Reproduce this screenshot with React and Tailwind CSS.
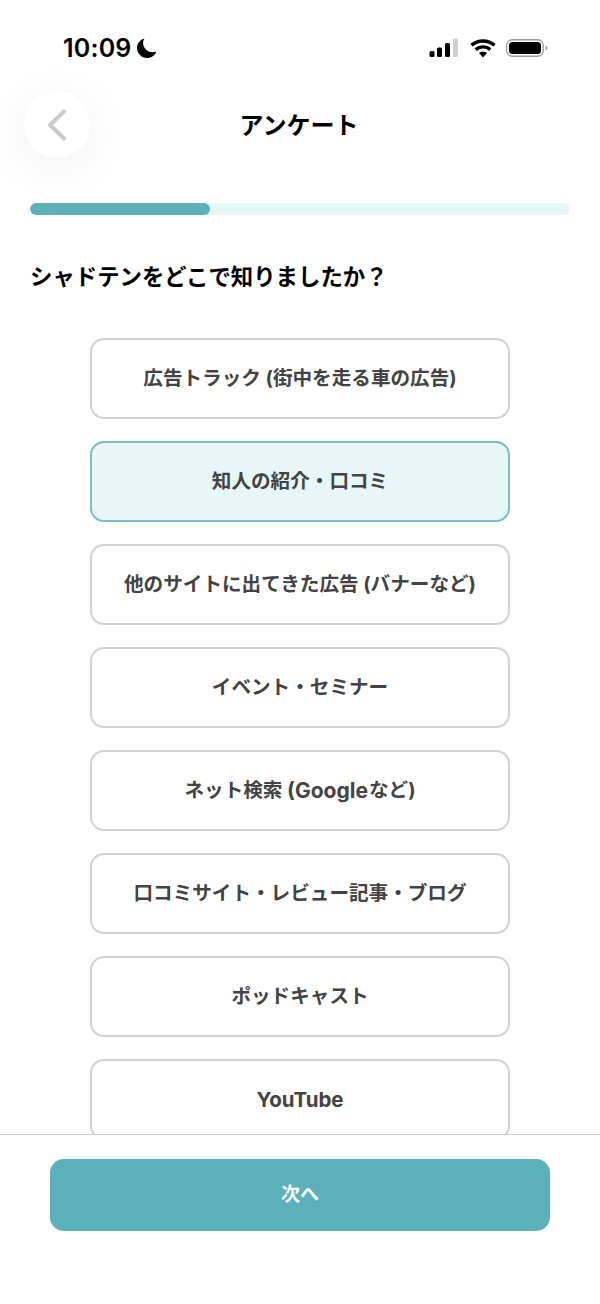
const FONT = "font-['Inter','Noto_Sans_CJK_JP',sans-serif]";

const options = [
  <>広告トラック (街中を走る車の広告)</>,
  <>知人の紹介・口コミ</>,
  <>他のサイトに出てきた広告 (バナーなど)</>,
  <>イベント・セミナー</>,
  <>ネット検索 <span className="text-[21px]">(Google</span><span className="ml-[1px]">など)</span></>,
  <>口コミサイト・レビュー記事・ブログ</>,
  <>ポッドキャスト</>,
  <span className="text-[20.5px]">YouTube</span>,
];

function Moon() {
  return (
    <svg width="20" height="20" viewBox="0 0 20 20" fill="#000">
      <path d="M7.6 0.4C3.2 1.4 0 5.3 0 10c0 5.5 4.5 10 10 10 4.3 0 8-2.7 9.4-6.6-1.2.5-2.5.8-3.9.8-5.2 0-9.4-4.200-9.4-9.400 0-1.500.5-3.100 1.500-4.400z" />
    </svg>
  );
}

function StatusIcons() {
  return (
    <div className="flex items-center">
      <svg width="30" height="20" viewBox="0 0 30 20" className="mr-[11px]">
        <rect x="0.500" y="13" width="5" height="6" rx="1.500" fill="#000" />
        <rect x="8" y="9.500" width="5" height="9.500" rx="1.500" fill="#000" />
        <rect x="16" y="5" width="5" height="14" rx="1.500" fill="#000" />
        <rect x="24" y="0.500" width="5" height="18.500" rx="1.500" fill="#cfcfcf" />
      </svg>
      <svg width="26" height="20" viewBox="0 0 26 20" className="mr-[10px]" fill="none" stroke="#000" strokeWidth="3.400">
        <path d="M1.500 7.300C7.800 1.500 18.200 1.500 24.500 7.300" />
        <path d="M5.700 11.600C9.800 8 16.200 8 20.300 11.600" />
        <path d="M13 19.500l-4-4.400c2.200-1.800 5.800-1.800 8 0z" fill="#000" stroke="none" />
      </svg>
      <svg width="42" height="20" viewBox="0 0 42 20">
        <rect x="0.750" y="1.750" width="36.500" height="16.500" rx="5.500" fill="none" stroke="#9a9a9a" strokeWidth="1.300" />
        <rect x="3" y="4" width="32" height="12" rx="3.500" fill="#000" />
        <path d="M39.500 7.500c1.400.4 2 1.400 2 2.500s-.6 2.100-2 2.500z" fill="#a0a0a0" />
      </svg>
    </div>
  );
}

export default function App() {
  return (
    <div className={`${FONT} h-[1304px] w-[600px] bg-white flex flex-col overflow-hidden`}>
      <div className="h-[96px] shrink-0 flex items-start justify-between pl-[63px] pr-[52px] pt-[34px]">
        <div className="flex items-center gap-[5px] h-[28px]">
          <span className="text-[25px] leading-[28px] font-semibold text-black tracking-[0.2px]">10:09</span>
          <Moon />
        </div>
        <div className="h-[28px] flex items-center"><StatusIcons /></div>
      </div>

      <div className="relative h-[58px] shrink-0 flex items-center justify-center">
        <div className="absolute left-[24px] top-[-4px] w-[66px] h-[66px] rounded-full bg-white shadow-[0_8px_48px_rgba(0,0,0,0.07)] flex items-center justify-center">
          <svg width="22" height="34" viewBox="0 0 22 34" fill="none" stroke="#c9c9c9" strokeWidth="4" strokeLinecap="round" strokeLinejoin="round">
            <path d="M18 3.500L4 17l14 13.500" />
          </svg>
        </div>
        <h1 className="text-[24px] leading-[32px] font-bold text-black pr-[2px] pt-[2px]">アンケート</h1>
      </div>

      <div className="px-[30px] pt-[49px] shrink-0">
        <div className="h-[12px] rounded-full bg-[#e7f6f7] overflow-hidden">
          <div className="h-full w-[180px] rounded-full bg-[#5cb0ba]" />
        </div>
      </div>

      <h2 className="shrink-0 px-[30px] mt-[46px] text-[22.4px] leading-[32px] font-bold text-black">
        シャドテンをどこで知りましたか？
      </h2>

      <div className="flex-1 min-h-0 overflow-hidden mt-[45px] px-[90px] flex flex-col gap-[22px]">
        {options.map((o, i) => (
          <div
            key={i}
            className={`h-[81px] shrink-0 rounded-[14px] border-2 pt-[1px] flex items-center justify-center whitespace-pre text-[19.6px] font-bold text-[#434343] ${
              i === 1 ? "bg-[#e7f6f7] border-[#79bec6]" : "bg-white border-[#d2d2d2]"
            }`}
          >
            {o}
          </div>
        ))}
      </div>

      <div className="h-[170px] shrink-0 border-t border-[#cdcdcd] px-[50px] pt-[24px]">
        <div className="h-[72px] rounded-[14px] bg-[#5cb0ba] flex items-center justify-center text-[19px] font-bold text-white">
          次へ
        </div>
      </div>
    </div>
  );
}
